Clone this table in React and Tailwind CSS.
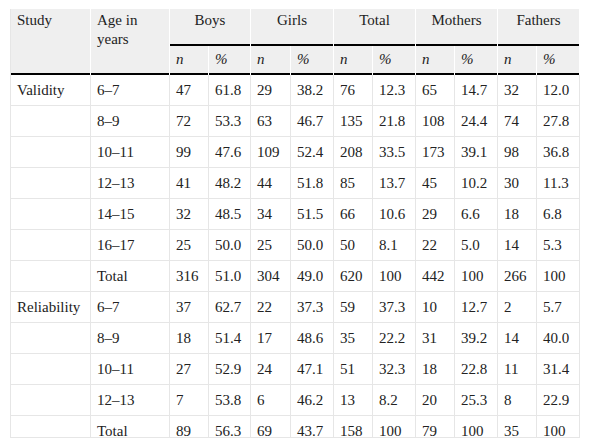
const groups = ["Boys", "Girls", "Total", "Mothers", "Fathers"];

const rows = [
  ["Validity", "6–7", "47", "61.8", "29", "38.2", "76", "12.3", "65", "14.7", "32", "12.0"],
  ["", "8–9", "72", "53.3", "63", "46.7", "135", "21.8", "108", "24.4", "74", "27.8"],
  ["", "10–11", "99", "47.6", "109", "52.4", "208", "33.5", "173", "39.1", "98", "36.8"],
  ["", "12–13", "41", "48.2", "44", "51.8", "85", "13.7", "45", "10.2", "30", "11.3"],
  ["", "14–15", "32", "48.5", "34", "51.5", "66", "10.6", "29", "6.6", "18", "6.8"],
  ["", "16–17", "25", "50.0", "25", "50.0", "50", "8.1", "22", "5.0", "14", "5.3"],
  ["", "Total", "316", "51.0", "304", "49.0", "620", "100", "442", "100", "266", "100"],
  ["Reliability", "6–7", "37", "62.7", "22", "37.3", "59", "37.3", "10", "12.7", "2", "5.7"],
  ["", "8–9", "18", "51.4", "17", "48.6", "35", "22.2", "31", "39.2", "14", "40.0"],
  ["", "10–11", "27", "52.9", "24", "47.1", "51", "32.3", "18", "22.8", "11", "31.4"],
  ["", "12–13", "7", "53.8", "6", "46.2", "13", "8.2", "20", "25.3", "8", "22.9"],
  ["", "Total", "89", "56.3", "69", "43.7", "158", "100", "79", "100", "35", "100"],
];

function HeadCell({ className = "", children }) {
  // gray header cell, black rule at the bottom stops 1px short of the white divider
  return (
    <div className={`flex flex-col bg-[#efefef] border-r border-white ${className}`}>
      <div className="flex-1 px-[6px]">{children}</div>
      <div className="h-[2px] bg-black" />
    </div>
  );
}

export default function App() {
  return (
    <div className="pt-[9px] pl-[10px] bg-white min-h-screen">
      <div className="w-[570px] h-[429px] overflow-hidden border-l border-b border-[#e6e6e6] text-[15px] text-[#222] font-['Liberation_Serif','Times_New_Roman',serif]">
        <div className="grid grid-cols-[80px_79px_39px_42px_40px_43px_39px_43px_39px_43px_39px_43px] grid-rows-[37px_29px]">
          <HeadCell className="row-span-2">
            <div className="pt-[2px] leading-[19px]">Study</div>
          </HeadCell>
          <HeadCell className="row-span-2">
            <div className="pt-[2px] leading-[19px]">Age in years</div>
          </HeadCell>
          {groups.map((g) => (
            <HeadCell key={g} className="col-span-2">
              <div className="pt-[2px] leading-[19px] text-center">{g}</div>
            </HeadCell>
          ))}
          {groups.map((g) => (
            <div key={g} className="contents">
              <HeadCell>
                <div className="h-full flex items-center italic">n</div>
              </HeadCell>
              <HeadCell>
                <div className="h-full flex items-center italic">%</div>
              </HeadCell>
            </div>
          ))}
        </div>
        <div className="grid grid-cols-[80px_79px_39px_42px_40px_43px_39px_43px_39px_43px_39px_43px] auto-rows-[31px]">
          {rows.map((r, i) =>
            r.map((c, j) => (
              <div
                key={`${i}-${j}`}
                className="flex items-center px-[6px] border-r border-b border-[#e6e6e6] whitespace-nowrap"
              >
                {c}
              </div>
            ))
          )}
        </div>
      </div>
    </div>
  );
}
